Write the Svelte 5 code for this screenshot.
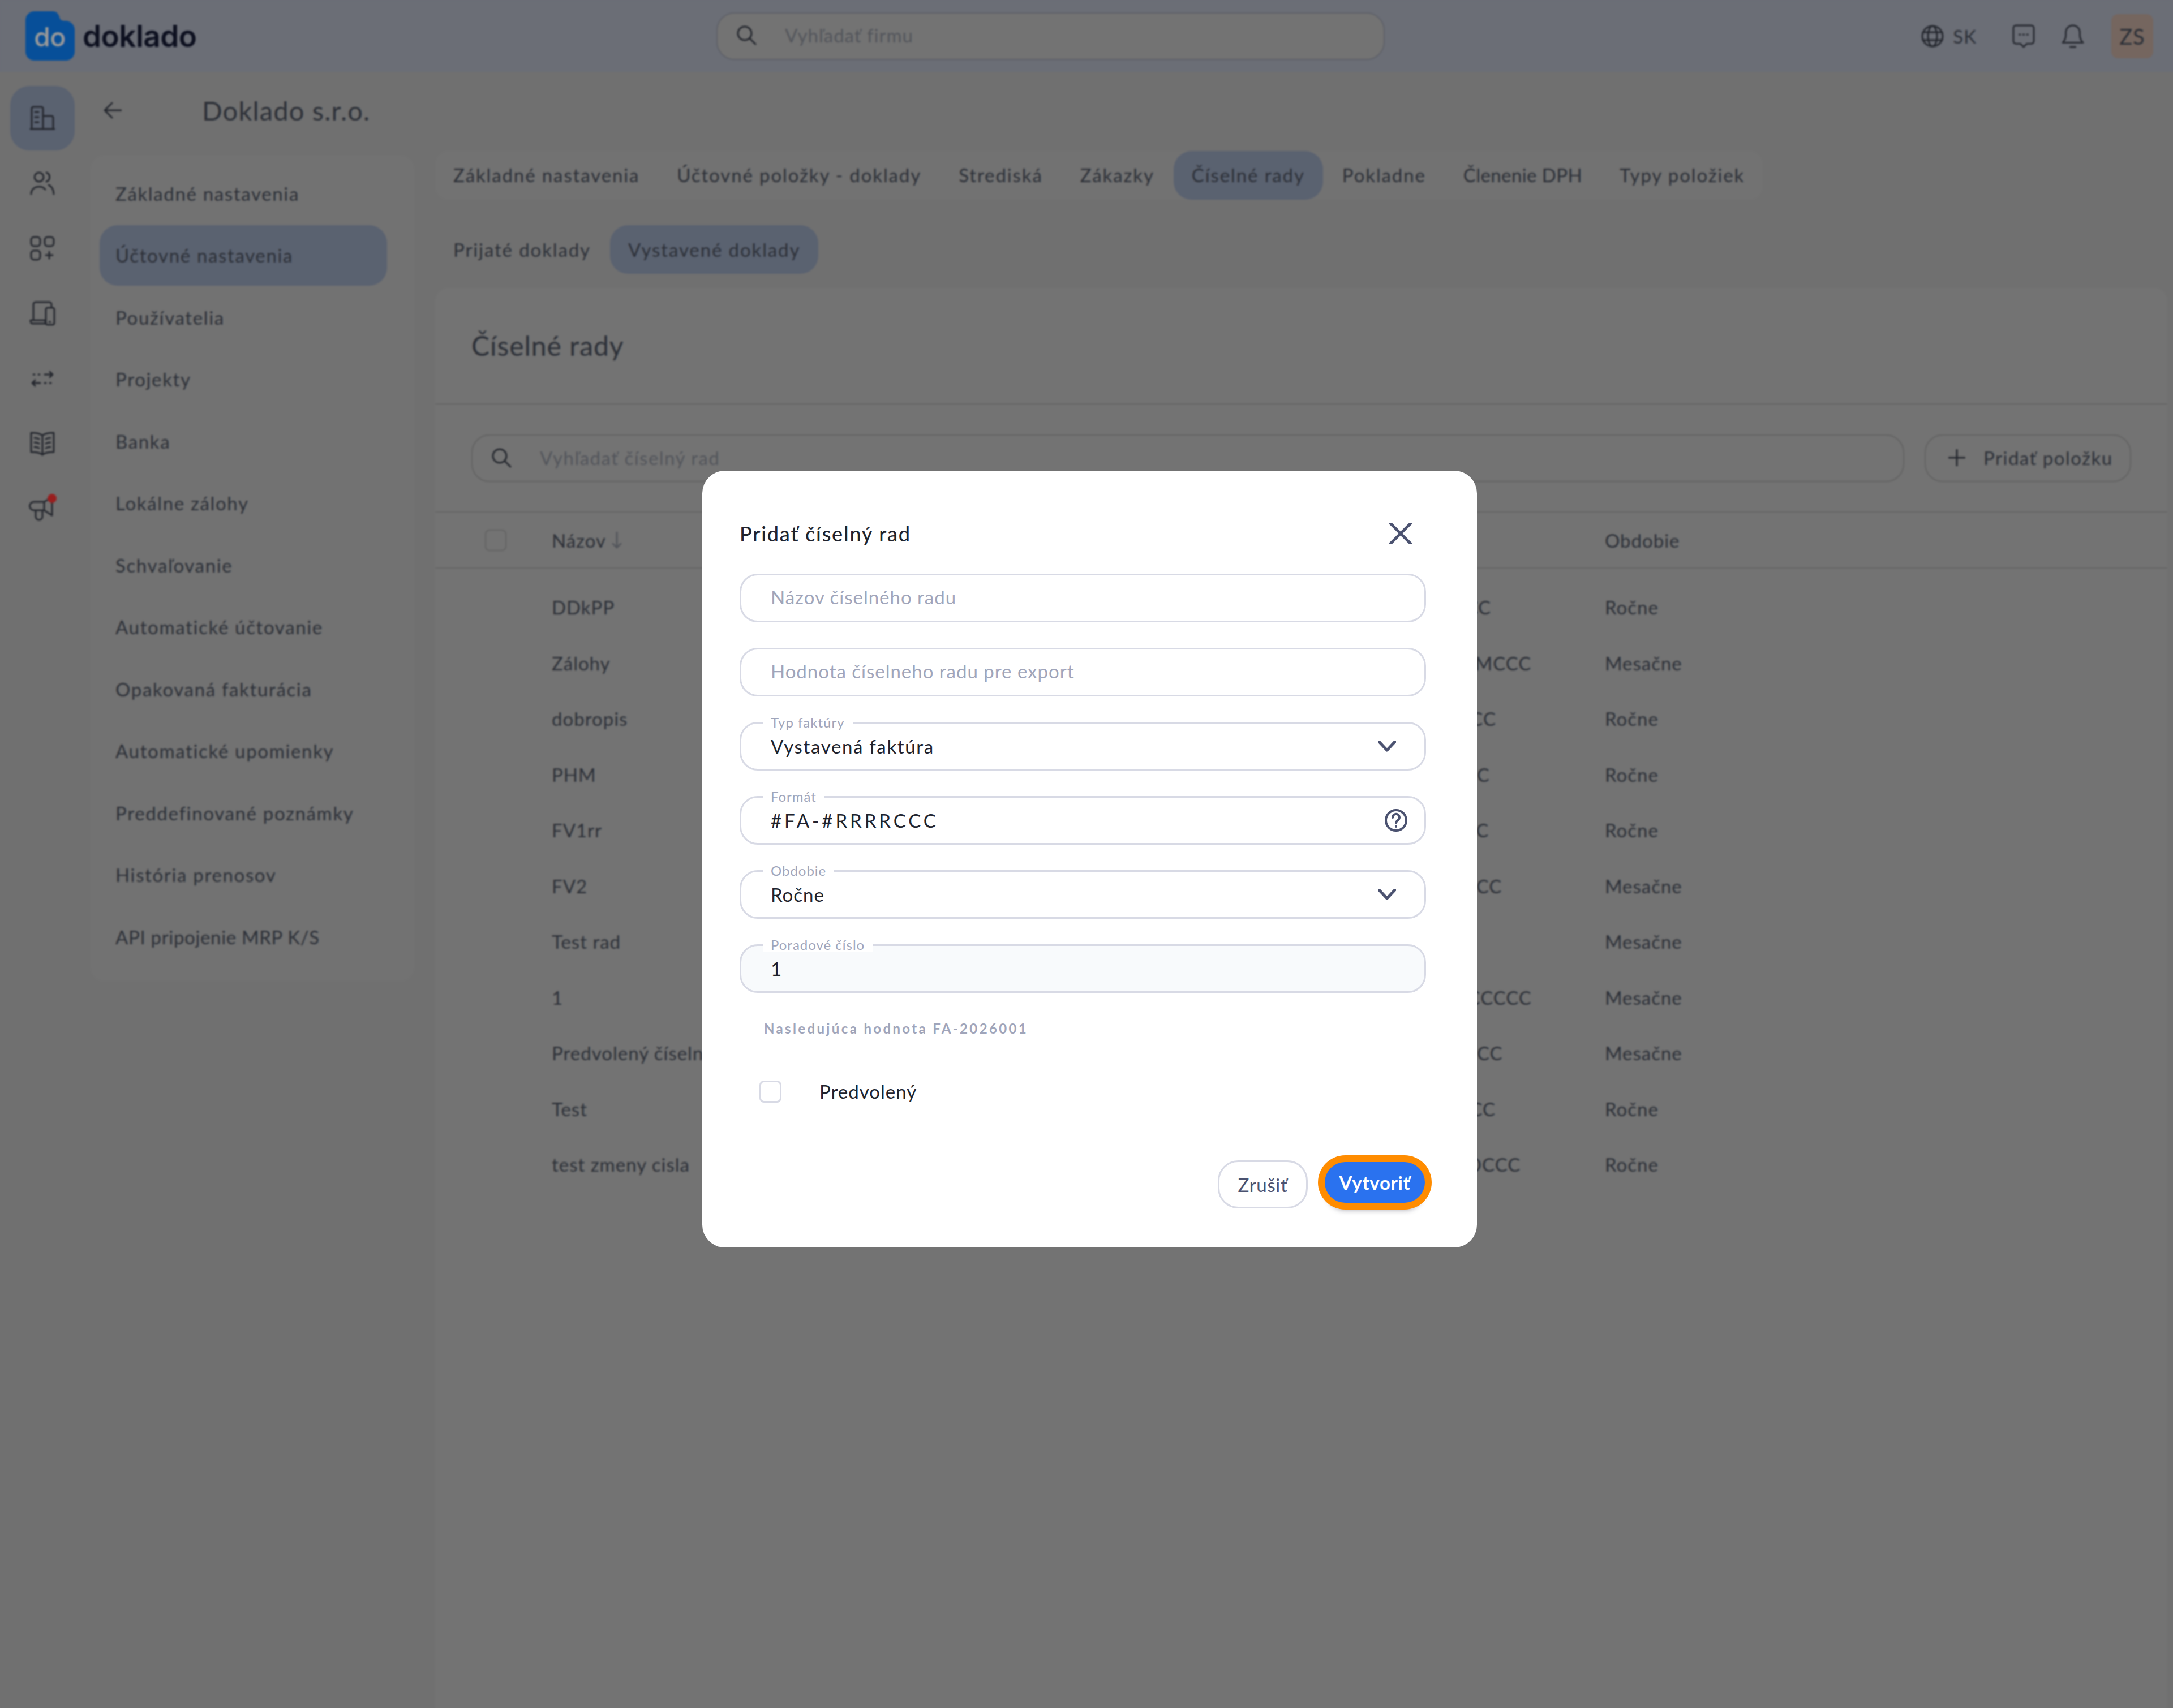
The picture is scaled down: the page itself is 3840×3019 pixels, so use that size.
<script>
  const railIcons = [
    { d: 'M3 41V5a3 3 0 0 1 3-3h14a3 3 0 0 1 3 3v36 M23 18h15a3 3 0 0 1 3 3v20 M1 41h42 M9 11h6 M9 20h6 M9 29h6', active: true },
    { d: 'M8 11a8 8 0 1 0 16 0a8 8 0 1 0-16 0 M29 3a8.5 8.5 0 0 1 0 16 M2 41c0-8 6-13 14-13 5 0 9 2 11 5 M33 25c5 2 9 8 9 16' },
    { d: 'M7 2h6a5 5 0 0 1 5 5v6a5 5 0 0 1-5 5H7a5 5 0 0 1-5-5V7a5 5 0 0 1 5-5z M31 2h6a5 5 0 0 1 5 5v6a5 5 0 0 1-5 5h-6a5 5 0 0 1-5-5V7a5 5 0 0 1 5-5z M7 26h6a5 5 0 0 1 5 5v6a5 5 0 0 1-5 5H7a5 5 0 0 1-5-5v-6a5 5 0 0 1 5-5z M34 28v12 M28 34h12' },
    { d: 'M6 34V6a4 4 0 0 1 4-4h24a4 4 0 0 1 4 4v4 M1 34h26v6H5a4 4 0 0 1-4-4z M31 12h9a3 3 0 0 1 3 3v24a3 3 0 0 1-3 3h-9a3 3 0 0 1-3-3V15a3 3 0 0 1 3-3z M34 37h2' },
    { d: 'M26 15h14 M35 10l5 5-5 5 M6 15h2 M15 15h2 M18 30H4 M9 25l-5 5 5 5 M26 30h2 M35 30h2' },
    { d: 'M22 8C18 4 10 3 2 3v34c8 0 16 1 20 5 4-4 12-5 20-5V3c-8 0-16 1-20 5z M22 8v34 M8 12c3 0 6 1 8 2 M8 20c3 0 6 1 8 2 M8 28c3 0 6 1 8 2 M36 12c-3 0-6 1-8 2 M36 20c-3 0-6 1-8 2 M36 28c-3 0-6 1-8 2' },
    { d: 'M7 10h18v15H7a7.5 7.5 0 0 1 0-15z M25 10l14-8v32l-14-9 M10 25v11a6 6 0 0 0 12 0V25', dot: true },
  ];

  const menu = [
    'Základné nastavenia', 'Účtovné nastavenia', 'Používatelia', 'Projekty', 'Banka', 'Lokálne zálohy',
    'Schvaľovanie', 'Automatické účtovanie', 'Opakovaná fakturácia', 'Automatické upomienky',
    'Preddefinované poznámky', 'História prenosov', 'API pripojenie MRP K/S',
  ];

  const tabs = ['Základné nastavenia', 'Účtovné položky - doklady', 'Strediská', 'Zákazky', 'Číselné rady', 'Pokladne', 'Členenie DPH', 'Typy položiek'];

  // name, format, period, indent of the format text in its column
  const rows = [
    ['DDkPP', '#DDKPP-#RRRRCCC', 'Ročne', 13],
    ['Zálohy', '#ZAL-#RRRRMMCCC', 'Mesačne', 77],
    ['dobropis', '#DOB-#RRRRCCC', 'Ročne', 62],
    ['PHM', '#PHM-#RRRRCCC', 'Ročne', 48],
    ['FV1rr', '#FV1-#RRRRCCC', 'Ročne', 62],
    ['FV2', '#FV2-#RRMMCCC', 'Mesačne', 65],
    ['Test rad', '#TR-#RMCC', 'Mesačne', 0],
    ['1', '#1-#RRRRMMCCCCC', 'Mesačne', 72],
    ['Predvolený číselný rad', '#PR-#RRRRMMCC', 'Mesačne', 66],
    ['Test', '#TEST-#RRRRCCC', 'Ročne', 59],
    ['test zmeny cisla', '#TZC-#RRRRDCCC', 'Ročne', 91],
  ];
</script>

<div class="page">
  <header class="topbar">
    <div class="brand">
      <svg class="logo" viewBox="0 0 87 87" aria-hidden="true">
        <path d="M16 0h32c7 0 10 4 12 10 1 5 4 7 9 7h2c9 0 16 7 16 16v38c0 9-7 16-16 16H16C7 87 0 80 0 71V16C0 7 7 0 16 0z" fill="#0c84ff"/>
        <text x="43" y="62" text-anchor="middle" class="logo-do">do</text>
      </svg>
      <span class="wordmark">doklado</span>
    </div>
    <div class="top-search">
      <svg class="ic36" viewBox="0 0 36 36"><circle cx="15" cy="15" r="12"/><path d="M24 24l10 10"/></svg>
      <span>Vyhľadať firmu</span>
    </div>
    <div class="top-right">
      <svg class="ic40" viewBox="0 0 40 40"><circle cx="20" cy="20" r="18"/><ellipse cx="20" cy="20" rx="8" ry="18"/><path d="M3 13h34 M3 27h34"/></svg>
      <span class="lang">SK</span>
      <svg class="ic40 chat" viewBox="0 0 42 44"><path d="M7 2h28a5 5 0 0 1 5 5v24a5 5 0 0 1-5 5h-8l-6 6-6-6H7a5 5 0 0 1-5-5V7a5 5 0 0 1 5-5z M13 19h2 M20 19h2 M27 19h2"/></svg>
      <svg class="ic40 bell" viewBox="0 0 42 46"><path d="M2 35c4-4 6-8 6-14v-5a13 13 0 0 1 26 0v5c0 6 2 10 6 14z M16 43h10"/></svg>
      <div class="avatar">ZS</div>
    </div>
  </header>

  <div class="body">
    <nav class="rail">
      {#each railIcons as icon}
        <div class="rail-btn" class:active={icon.active}>
          <svg viewBox="0 0 44 44" aria-hidden="true">
            <path d={icon.d}/>
            {#if icon.dot}<circle class="dot" cx="39" cy="4" r="8"/>{/if}
          </svg>
        </div>
      {/each}
    </nav>

    <aside class="side">
      <div class="company">
        <svg class="back" viewBox="0 0 32 30"><path d="M31 15H2 M15 2L2 15l13 13"/></svg>
        <span>Doklado s.r.o.</span>
      </div>
      <ul class="menu">
        {#each menu as item, i}
          <li class:active={i === 1} class:tight={i === 12}>{item}</li>
        {/each}
      </ul>
    </aside>

    <main class="main">
      <div class="tabs">
        {#each tabs as tab, i}
          <span class="tab" class:active={i === 4} class:tight={i === 6}>{tab}</span>
        {/each}
      </div>
      <div class="subtabs">
        <span class="tab">Prijaté doklady</span>
        <span class="tab active">Vystavené doklady</span>
      </div>

      <section class="card">
        <h1>Číselné rady</h1>
        <div class="toolbar">
          <div class="search">
            <svg class="ic36" viewBox="0 0 36 36"><circle cx="15" cy="15" r="12"/><path d="M24 24l10 10"/></svg>
            <span>Vyhľadať číselný rad</span>
          </div>
          <div class="add">
            <svg viewBox="0 0 30 30"><path d="M15 1v28 M1 15h28"/></svg>
            <span>Pridať položku</span>
          </div>
        </div>
        <div class="thead">
          <span class="check"></span>
          <span class="sort">Názov
            <svg viewBox="0 0 18 30"><path d="M9 1v27 M2 21l7 7 7-7"/></svg>
          </span>
          <span></span>
          <span>Obdobie</span>
        </div>
        <div class="tbody">
          {#each rows as row}
            <div class="row">
              <span></span>
              <span>{row[0]}</span>
              <span style="padding-left: {row[3]}px">{row[1]}</span>
              <span>{row[2]}</span>
            </div>
          {/each}
        </div>
      </section>
    </main>
  </div>

  <div class="overlay">
    <div class="modal">
      <div class="modal-head">
        <h2>Pridať číselný rad</h2>
        <svg viewBox="0 0 40 38"><path d="M2 1l36 36 M38 1L2 37"/></svg>
      </div>

      <div class="field"><span class="ph">Názov číselného radu</span></div>
      <div class="field"><span class="ph">Hodnota číselneho radu pre export</span></div>
      <div class="field">
        <label>Typ faktúry</label>
        <span class="wide">Vystavená faktúra</span>
        <svg class="chev" viewBox="0 0 32 20"><path d="M2 2l14 15L30 2"/></svg>
      </div>
      <div class="field">
        <label>Formát</label>
        <span class="mono">#FA-#RRRRCCC</span>
        <svg class="help" viewBox="0 0 40 40"><circle cx="20" cy="20" r="18"/><path d="M14 15a6 6 0 1 1 9 5c-2 1.500-3 2.500-3 5 M20 30v1"/></svg>
      </div>
      <div class="field">
        <label>Obdobie</label>
        <span>Ročne</span>
        <svg class="chev" viewBox="0 0 32 20"><path d="M2 2l14 15L30 2"/></svg>
      </div>
      <div class="field filled">
        <label>Poradové číslo</label>
        <span>1</span>
      </div>

      <p class="hint">Nasledujúca hodnota FA-2026001</p>

      <div class="default">
        <span class="box"></span>
        <span>Predvolený</span>
      </div>

      <div class="actions">
        <button class="cancel">Zrušiť</button>
        <button class="create">Vytvoriť</button>
      </div>
    </div>
  </div>
</div>

<style>
  :global(body) {
    margin: 0;
  }

  .page {
    position: relative;
    width: 3840px;
    height: 3019px;
    overflow: hidden;
    background: #bbbbbb;
    color: #4a505d;
    font-family: Lato, "Liberation Sans", sans-serif;
    font-size: 33px;
    letter-spacing: 0.03em;
    display: flex;
    flex-direction: column;
  }

  svg {
    fill: none;
    stroke: #3c414d;
    stroke-width: 3;
    stroke-linecap: round;
    stroke-linejoin: round;
    flex: none;
  }

  .ic36 { width: 36px; height: 36px; }
  .ic40 { width: 40px; height: 40px; }

  /* top bar */
  .topbar {
    height: 127px;
    flex: none;
    display: flex;
    align-items: center;
    background: #b2b7c5;
    box-sizing: border-box;
    padding: 0 35px 0 45px;
  }
  .brand {
    width: 1221px;
    display: flex;
    align-items: center;
    gap: 14px;
    flex: none;
  }
  .logo { width: 87px; height: 87px; stroke: none; }
  .logo-do {
    fill: #fff;
    font-family: Inter, sans-serif;
    font-size: 46px;
    font-weight: 500;
    letter-spacing: 0;
  }
  .wordmark {
    font-family: Inter, sans-serif;
    font-size: 53px;
    font-weight: 600;
    letter-spacing: -0.01em;
    color: #161b35;
  }
  .top-search {
    width: 1181px;
    height: 84px;
    box-sizing: border-box;
    border: 2px solid #9da1ad;
    border-radius: 32px;
    background: #c0c0c0;
    display: flex;
    align-items: center;
    gap: 50px;
    padding: 0 0 3px 33px;
    color: #8a8e98;
  }
  .top-right {
    margin-left: auto;
    display: flex;
    align-items: center;
  }
  .lang { margin-left: 16px; }
  .chat { margin-left: 63px; height: 42px; }
  .bell { margin-left: 47px; height: 46px; }
  .avatar {
    width: 74px;
    height: 78px;
    margin-left: 48px;
    border-radius: 12px;
    background: #c3aa9e;
    display: flex;
    align-items: center;
    justify-content: center;
    font-size: 38px;
  }

  .body {
    flex: 1;
    display: flex;
    min-height: 0;
  }

  /* icon rail */
  .rail {
    width: 150px;
    flex: none;
    box-sizing: border-box;
    padding: 25px 0 0 18px;
    display: flex;
    flex-direction: column;
    gap: 1px;
  }
  .rail-btn {
    width: 114px;
    height: 114px;
    border-radius: 34px;
    display: flex;
    align-items: center;
    justify-content: center;
  }
  .rail-btn svg { width: 44px; height: 44px; overflow: visible; }
  .rail-btn.active { background: #96a3bb; }
  .dot { fill: #ff3333; stroke: none; }

  /* settings menu */
  .side {
    width: 619px;
    flex: none;
    padding-left: 10px;
    box-sizing: border-box;
  }
  .company {
    height: 135px;
    margin-bottom: 13px;
    display: flex;
    align-items: center;
    gap: 142px;
    padding-left: 23px;
    font-size: 47px;
    letter-spacing: 0.025em;
  }
  .back { width: 32px; height: 30px; }
  .menu {
    list-style: none;
    margin: 0;
    width: 572px;
    box-sizing: border-box;
    padding: 13px 0 22px 16px;
    background: #bebebe;
    border-radius: 24px;
    letter-spacing: 0.05em;
  }
  .menu li {
    width: 508px;
    height: 107px;
    margin-bottom: 2.500px;
    box-sizing: border-box;
    padding-left: 28px;
    border-radius: 32px;
    display: flex;
    align-items: center;
  }
  .menu li.active { background: #96a3bb; }
  .menu li.tight { letter-spacing: 0.02em; }

  /* tabs */
  .main {
    flex: 1;
    min-width: 0;
    padding: 140px 10px 0 0;
  }
  .tabs {
    display: inline-flex;
    gap: 2px;
    background: #bebebe;
    border-radius: 24px;
    vertical-align: top;
  }
  .tabs .tab { padding-bottom: 3px; height: 83px; }
  .tab {
    height: 86px;
    padding: 0 32px;
    border-radius: 32px;
    display: flex;
    align-items: center;
    white-space: nowrap;
    letter-spacing: 0.057em;
  }
  .tab.tight { letter-spacing: 0.012em; }
  .tab.active { background: #96a3bb; }
  .subtabs {
    display: flex;
    gap: 2px;
    margin-top: 45px;
  }

  /* card */
  .card {
    margin-top: 25px;
    height: 2700px;
    background: #c0c0c0;
    border-radius: 24px 24px 0 0;
  }
  h1 {
    margin: 0;
    height: 206px;
    box-sizing: border-box;
    padding: 0 0 2px 64px;
    display: flex;
    align-items: center;
    border-bottom: 2px solid #aaa;
    font-size: 48px;
    font-weight: 400;
    letter-spacing: 0.02em;
  }
  .toolbar {
    height: 191px;
    box-sizing: border-box;
    padding: 53px 64px 0;
    display: flex;
    gap: 36px;
    border-bottom: 2px solid #aaa;
  }
  .search {
    flex: 1;
    height: 84px;
    box-sizing: border-box;
    border: 2px solid #a2a2a2;
    border-radius: 32px;
    display: flex;
    align-items: center;
    gap: 50px;
    padding: 0 0 3px 33px;
    color: #8a8e98;
    letter-spacing: 0.045em;
  }
  .add {
    width: 365px;
    height: 84px;
    box-sizing: border-box;
    border: 2px solid #a2a2a2;
    border-radius: 32px;
    display: flex;
    align-items: center;
    gap: 32px;
    padding: 0 0 2px 40px;
    white-space: nowrap;
    letter-spacing: 0.045em;
  }
  .add svg { width: 30px; height: 30px; }

  .thead, .row {
    display: grid;
    grid-template-columns: 118px 1323px 538px 1fr;
    padding-left: 88px;
    align-items: center;
  }
  .thead {
    height: 97px;
    border-bottom: 2px solid #aaa;
  }
  .check {
    width: 38px;
    height: 38px;
    box-sizing: border-box;
    border: 2px solid #a2a2a2;
    border-radius: 8px;
  }
  .sort {
    display: flex;
    align-items: center;
    gap: 10px;
  }
  .sort svg { width: 18px; height: 30px; stroke: #8a8e98; }
  .tbody { padding-top: 19px; }
  .row {
    height: 98.500px;
    white-space: nowrap;
  }

  /* modal */
  .overlay {
    position: absolute;
    inset: 0;
    background: rgba(0, 0, 0, 0.4);
    backdrop-filter: blur(1.500px);
  }
  .modal {
    position: absolute;
    left: 1241px;
    top: 832px;
    width: 1369px;
    height: 1373px;
    box-sizing: border-box;
    padding: 0 90px 0 66px;
    background: #fff;
    border-radius: 40px;
    color: #20232d;
  }
  .modal svg { stroke: #4b5270; }
  .modal-head {
    height: 182px;
    display: flex;
    align-items: flex-start;
    justify-content: space-between;
    padding-right: 25px;
  }
  .modal-head svg {
    width: 40px;
    height: 38px;
    margin-top: 92px;
    stroke-width: 5;
  }
  h2 {
    margin: 84px 0 0;
    font-size: 36px;
    line-height: 54px;
    font-weight: 500;
    letter-spacing: 0.05em;
  }
  .field {
    position: relative;
    height: 86px;
    margin-bottom: 45px;
    box-sizing: border-box;
    border: 3px solid #d8dae5;
    border-radius: 32px;
    padding: 0 50px 0 52px;
    display: flex;
    align-items: center;
    justify-content: space-between;
  }
  .field.filled { background: #f8fafc; }
  .ph { color: #a0a5ba; margin-top: -4px; }
  .wide { letter-spacing: 0.05em; }
  .mono { letter-spacing: 0.15em; }
  .field label {
    position: absolute;
    left: 38px;
    top: -14px;
    padding: 0 14px;
    background: #fff;
    color: #a0a5ba;
    font-size: 24px;
    line-height: 24px;
  }
  .chev { width: 32px; height: 20px; stroke-width: 5; }
  .help {
    width: 40px;
    height: 40px;
    margin-right: -20px;
    stroke-width: 4;
  }
  .hint {
    margin: -2px 0 0 43px;
    font-size: 24px;
    line-height: 40px;
    font-weight: 700;
    letter-spacing: 0.14em;
    color: #a0a5ba;
  }
  .default {
    display: flex;
    align-items: center;
    gap: 67px;
    margin: 71px 0 0 35px;
  }
  .box {
    width: 39px;
    height: 39px;
    box-sizing: border-box;
    border: 3px solid #d8dae5;
    border-radius: 8px;
  }
  .actions {
    display: flex;
    justify-content: flex-end;
    gap: 30px;
    margin: 102px 2px 0 0;
  }
  button {
    font: inherit;
    letter-spacing: 0.02em;
    padding: 0;
  }
  .cancel {
    width: 159px;
    height: 85px;
    background: #fff;
    border: 3px solid #d8dae5;
    border-radius: 36px;
    color: #4b5270;
  }
  .create {
    width: 177px;
    height: 72px;
    margin-top: 3px;
    background: #2a72ef;
    border: none;
    border-radius: 36px;
    color: #fff;
    font-weight: 700;
    box-shadow: 0 0 0 12px #ff8c00, 0 16px 8px -2px rgba(60, 60, 80, 0.35);
  }
</style>
